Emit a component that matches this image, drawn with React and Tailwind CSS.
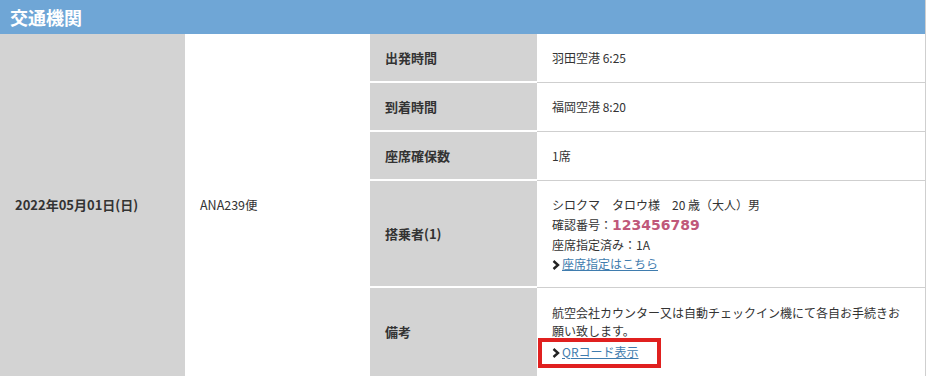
import React from "react";

const jp = { fontFamily: '"Noto Sans CJK JP", "Noto Sans", sans-serif' };

function Chevron() {
  return (
    <svg width="8" height="10" viewBox="0 0 8 10" className="inline-block mr-[2px] align-[-1px]">
      <polyline points="1.5,1 6,5 1.5,9" fill="none" stroke="#222" strokeWidth="2.4" />
    </svg>
  );
}

function Row({ label, h, children, last }) {
  return (
    <div className={`flex ${h}`}>
      <div className={`w-[167px] shrink-0 bg-[#d3d3d3] flex items-center pl-[15px] font-bold text-[13px] text-[#333] ${last ? "" : "border-b-2 border-white"}`}>
        {label}
      </div>
      <div className={`flex-1 bg-white flex items-center pl-[15px] pr-3 text-[12px] text-[#333] leading-[18px] ${last ? "" : "border-b border-[#cfcfcf]"}`}>
        <div>{children}</div>
      </div>
    </div>
  );
}

export default function App() {
  return (
    <div className="w-[927px] h-[376px] overflow-hidden bg-white" style={jp}>
      <div className="w-[926px] border-r border-[#cfcfcf]">
        <div className="h-[34px] bg-[#6fa6d6] flex items-center pl-[10px] text-white font-bold text-[18px]">
          交通機関
        </div>
        <div className="flex">
          <div className="w-[185px] shrink-0 bg-[#d3d3d3] flex items-center pl-[15px] font-bold text-[13px] text-[#333]">
            2022年05月01日(日)
          </div>
          <div className="w-[185px] shrink-0 bg-white flex items-center pl-[15px] text-[12.5px] text-[#333]">
            ANA239便
          </div>
          <div className="flex-1 flex flex-col">
            <Row label="出発時間" h="h-[49px]">羽田空港 6:25</Row>
            <Row label="到着時間" h="h-[49px]">福岡空港 8:20</Row>
            <Row label="座席確保数" h="h-[49px]">1席</Row>
            <Row label="搭乗者(1)" h="h-[107px]">
              <div>シロクマ　タロウ様　20 歳（大人）男</div>
              <div className="leading-[21px]">
                確認番号：
                <span className="font-bold text-[14px] text-[#c0587a]" style={{ fontFamily: '"DejaVu Sans", sans-serif' }}>
                  123456789
                </span>
              </div>
              <div>座席指定済み：1A</div>
              <div className="mt-[1px]">
                <Chevron />
                <a className="text-[#3f7cae] underline">座席指定はこちら</a>
              </div>
            </Row>
            <Row label="備考" h="h-[88px]" last>
              <div>航空会社カウンター又は自動チェックイン機にて各自お手続きお</div>
              <div>願い致します。</div>
              <div className="relative mt-[3px]">
                <span className="absolute left-[-14px] top-[-5px] w-[123px] h-[30px] border-[4px] border-[#e0201f]"></span>
                <Chevron />
                <a className="text-[#3f7cae] underline">QRコード表示</a>
              </div>
            </Row>
          </div>
        </div>
      </div>
    </div>
  );
}
